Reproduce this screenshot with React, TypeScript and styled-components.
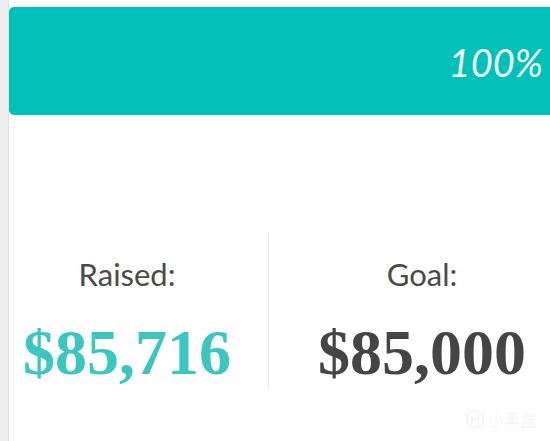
import styled, { createGlobalStyle } from "styled-components";

const GlobalStyle = createGlobalStyle`
    html, body {
        margin: 0;
        padding: 0;
        background: #ffffff;
        overflow: hidden;
    }
`;

const Page = styled.div`
    display: flex;
    width: 550px;
    height: 441px;
    position: relative;
    overflow: hidden;
`;

const Gutter = styled.div`
    flex: 0 0 8px;
    background-color: #ededed;
    border-right: 1px solid #e2e2e2;
`;

const Main = styled.div`
    flex: 0 0 566px;
    padding-top: 7px;
`;

const ProgressBar = styled.div`
    height: 108px;
    background-color: #00c0b8;
    border-radius: 5px;
    display: flex;
    align-items: center;
    justify-content: flex-end;
    padding-right: 32px;
`;

const Percent = styled.span`
    font-family: Lato, "Open Sans", sans-serif;
    font-style: italic;
    font-size: 38px;
    color: #f4fffe;
    line-height: 1;
    margin-top: 2px;
`;

const Stats = styled.div`
    display: grid;
    grid-template-columns: 259px 1px 1fr;
    margin-top: 118px;
    height: 154px;
`;

const Divider = styled.div`
    background-color: #e6e6e6;
`;

const Stat = styled.div<{ $shift: number }>`
    display: flex;
    flex-direction: column;
    align-items: center;
    padding-top: 24px;
    padding-right: ${(p) => p.$shift}px;
`;

const Label = styled.div`
    font-family: Lato, "Open Sans", sans-serif;
    font-size: 31px;
    line-height: 34px;
    color: #4a4a4a;
`;

const Amount = styled.div<{ $accent?: boolean }>`
    font-family: "Liberation Serif", "Times New Roman", serif;
    font-weight: 700;
    font-size: 64px;
    line-height: 70px;
    margin-top: 27px;
    color: ${(p) => (p.$accent ? "#3cc6c0" : "#454545")};
`;

const Watermark = styled.div`
    position: absolute;
    left: 466px;
    top: 407px;
    display: flex;
    align-items: center;
    gap: 4px;
    color: rgba(0, 0, 0, 0.04);
    font-family: "Noto Sans CJK SC", sans-serif;
    font-size: 16px;
    font-weight: 700;
`;

export default function App() {
    return (
        <>
            <GlobalStyle />
            <Page>
                <Gutter />
                <Main>
                    <ProgressBar>
                        <Percent>100%</Percent>
                    </ProgressBar>
                    <Stats>
                        <Stat $shift={23}>
                            <Label>Raised:</Label>
                            <Amount $accent>$85,716</Amount>
                        </Stat>
                        <Divider />
                        <Stat $shift={0}>
                            <Label>Goal:</Label>
                            <Amount>$85,000</Amount>
                        </Stat>
                    </Stats>
                </Main>
                <Watermark>
                    <svg width="18" height="20" viewBox="0 0 18 20" fill="none" stroke="currentColor" strokeWidth="2">
                        <path d="M9 1 L17 5.5 V14.5 L9 19 L1 14.5 V5.5 Z" />
                        <path d="M6 6 V14 M12 6 V14 M6 10 H12" />
                    </svg>
                    <span>小黑盒</span>
                </Watermark>
            </Page>
        </>
    );
}
